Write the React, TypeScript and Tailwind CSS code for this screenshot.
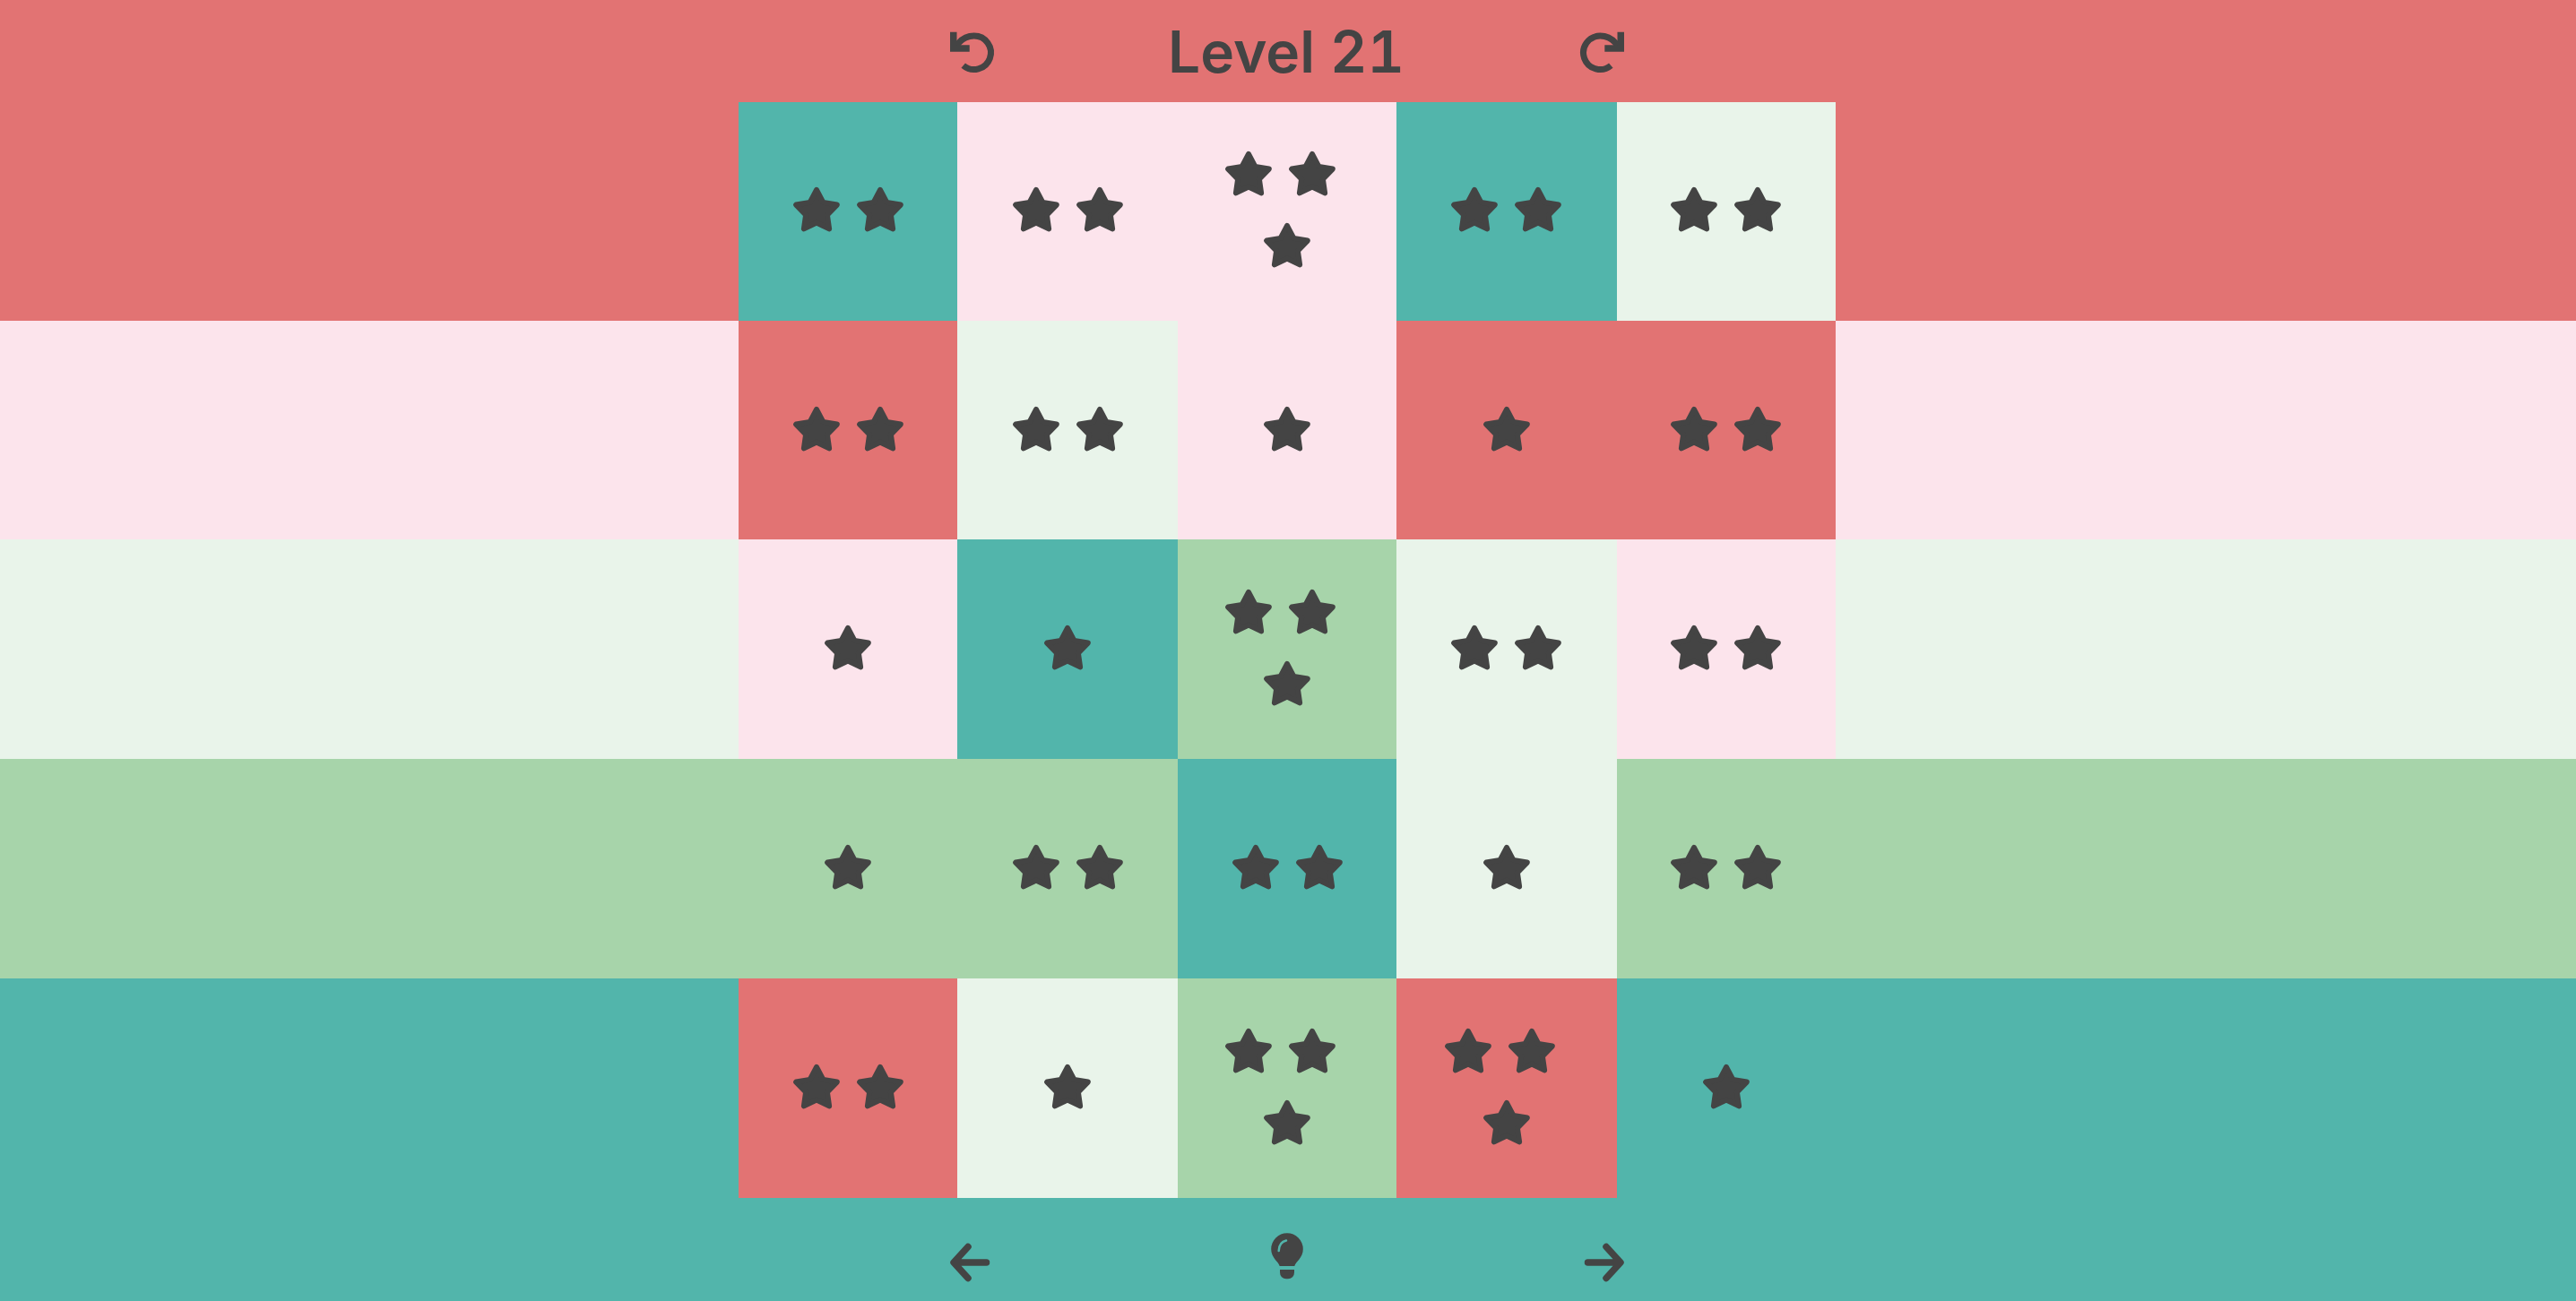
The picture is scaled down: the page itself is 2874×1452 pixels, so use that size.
const RED = 'bg-[#e27373]';
const PINK = 'bg-[#fce4ec]';
const LIGHT = 'bg-[#e9f4ea]';
const GREEN = 'bg-[#a7d4aa]';
const TEAL = 'bg-[#52b5ab]';

type Cell = { bg: string; stars: number };

const colWidths = ['w-[244px]', 'w-[246px]', 'w-[244px]', 'w-[246px] pr-[1px]', 'w-[244px] pr-[1px]'];

const rows: { bg: string; height: string; nudge?: string; cells: Cell[] }[] = [
  {
    bg: RED,
    height: 'h-[244px]',
    cells: [
      { bg: TEAL, stars: 2 },
      { bg: PINK, stars: 2 },
      { bg: PINK, stars: 3 },
      { bg: TEAL, stars: 2 },
      { bg: LIGHT, stars: 2 },
    ],
  },
  {
    bg: PINK,
    height: 'h-[244px]',
    nudge: 'pt-[2px]',
    cells: [
      { bg: RED, stars: 2 },
      { bg: LIGHT, stars: 2 },
      { bg: PINK, stars: 1 },
      { bg: RED, stars: 1 },
      { bg: RED, stars: 2 },
    ],
  },
  {
    bg: LIGHT,
    height: 'h-[245px]',
    cells: [
      { bg: PINK, stars: 1 },
      { bg: TEAL, stars: 1 },
      { bg: GREEN, stars: 3 },
      { bg: LIGHT, stars: 2 },
      { bg: PINK, stars: 2 },
    ],
  },
  {
    bg: GREEN,
    height: 'h-[245px]',
    cells: [
      { bg: GREEN, stars: 1 },
      { bg: GREEN, stars: 2 },
      { bg: TEAL, stars: 2 },
      { bg: LIGHT, stars: 1 },
      { bg: GREEN, stars: 2 },
    ],
  },
  {
    bg: TEAL,
    height: 'h-[245px]',
    cells: [
      { bg: RED, stars: 2 },
      { bg: LIGHT, stars: 1 },
      { bg: GREEN, stars: 3 },
      { bg: RED, stars: 3 },
      { bg: TEAL, stars: 1 },
    ],
  },
];

function Star() {
  return (
    <svg width="60" height="60" viewBox="0 0 60 60" className="shrink-0">
      <polygon
        points="30,6 37.35,19.89 52.83,22.58 41.89,33.86 44.11,49.42 30,42.5 15.89,49.42 18.11,33.86 7.17,22.58 22.65,19.89"
        fill="#444444"
        stroke="#444444"
        strokeWidth="6"
        strokeLinejoin="round"
      />
    </svg>
  );
}

function Stars({ count }: { count: number }) {
  if (count === 3) {
    // the pair sits a little left of the third star
    return (
      <div className="flex flex-col items-center gap-y-[20px]">
        <div className="flex gap-x-[11px] pr-[15px]">
          <Star />
          <Star />
        </div>
        <Star />
      </div>
    );
  }
  return (
    <div className="flex gap-x-[11px]">
      {Array.from({ length: count }).map((_, s) => (
        <Star key={s} />
      ))}
    </div>
  );
}

function TurnIcon({ flip }: { flip?: boolean }) {
  return (
    <svg width="60" height="60" viewBox="0 0 60 60" fill="none" className={`mt-[30px] ${flip ? '-scale-x-100' : ''}`}>
      <path
        d="M19.7 43.1A18.7 18.7 0 1 0 31.7 10.1C25 10.1 19 13 14.5 18L8.75 24"
        stroke="#444444"
        strokeWidth="7"
      />
      <path d="M8.75 5.7V24H26.7" stroke="#444444" strokeWidth="7.5" />
    </svg>
  );
}

function ArrowIcon({ flip }: { flip?: boolean }) {
  return (
    <svg width="60" height="60" viewBox="0 0 60 60" fill="none" className={`mt-[42px] ${flip ? '-scale-x-100' : ''}`}>
      <path
        d="M45.5 30H9.5M25 12.5 9 30 25 47.5"
        stroke="#444444"
        strokeWidth="7.5"
        strokeLinecap="round"
        strokeLinejoin="round"
      />
    </svg>
  );
}

function BulbIcon() {
  return (
    <svg width="50" height="60" viewBox="0 0 50 60" className="mt-[33px]">
      <path
        d="M16.7 43C15.5 38 7.2 34 7.2 24A17.8 17.8 0 0 1 42.8 24C42.8 34 34.5 38 33.3 43Z"
        fill="#444444"
      />
      <path d="M17 47H33V50A7 7 0 0 1 26 57.3H24A7 7 0 0 1 17 50Z" fill="#444444" />
      <path d="M15.7 26C16 20 19 15.5 24 14.5" fill="none" stroke="#52b5ab" strokeWidth="2.5" strokeLinecap="round" />
    </svg>
  );
}

export default function App() {
  return (
    <div className="h-[1452px] w-full overflow-hidden font-['Inter',sans-serif] text-[#444444]">
      {/* Header */}
      <div className={`flex h-[114px] pl-[1055px] ${RED}`}>
        <div className="flex w-[762px] items-start justify-between">
          <TurnIcon />
          <h1 className="mt-[20px] mr-[2px] text-[64px] leading-[75px] font-semibold tabular-nums">Level 21</h1>
          <TurnIcon flip />
        </div>
      </div>

      {/* Board */}
      {rows.map((row, r) => (
        <div key={r} className={`flex ${row.height} ${row.bg}`}>
          <div className="w-[824px] shrink-0" />
          {row.cells.map((cell, c) => (
            <div key={c} className={`flex shrink-0 items-center justify-center ${colWidths[c]} ${row.nudge ?? ''} ${cell.bg}`}>
              <Stars count={cell.stars} />
            </div>
          ))}
        </div>
      ))}

      {/* Footer */}
      <div className={`flex h-[115px] pl-[1055px] ${TEAL}`}>
        <div className="flex w-[762px] items-start justify-between">
          <ArrowIcon />
          <BulbIcon />
          <ArrowIcon flip />
        </div>
      </div>
    </div>
  );
}
